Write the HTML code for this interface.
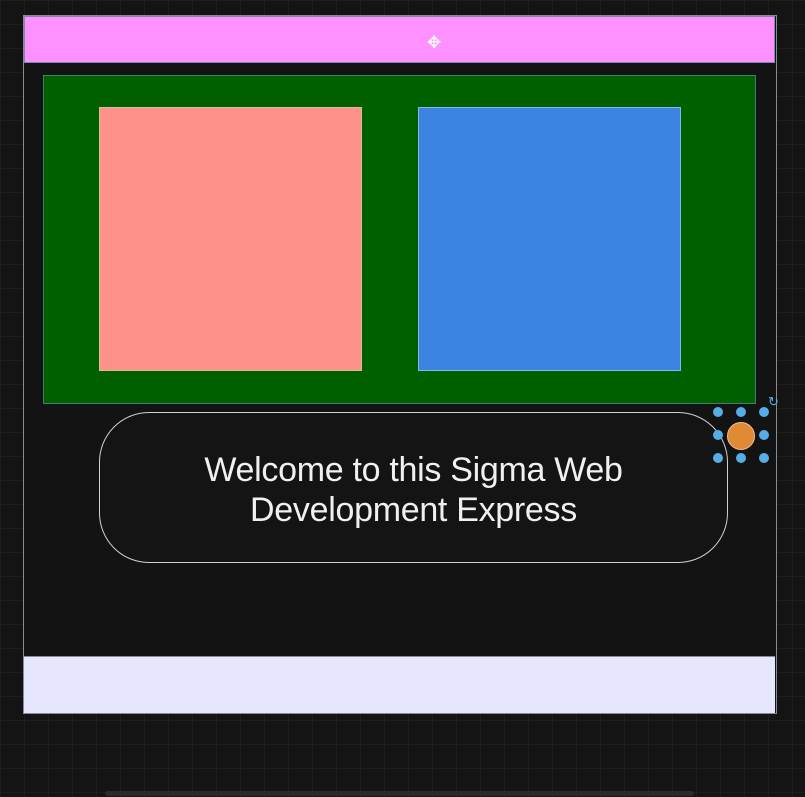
<!DOCTYPE html>
<html><head><style>
html,body{margin:0;padding:0;width:805px;height:797px;overflow:hidden;background:#141414;
background-image:linear-gradient(#1e1e1e 1px,transparent 1px),linear-gradient(90deg,#1e1e1e 1px,transparent 1px);background-size:24px 24px;position:relative;font-family:"Liberation Sans",sans-serif}
div{position:absolute;box-sizing:border-box}
.dot{width:10px;height:10px;border-radius:50%;background:#55aee6}
</style></head><body>
<div style="left:23px;top:15px;width:754px;height:699px;background:#131313;border:1px solid #8a8a95"></div>
<div style="left:24px;top:16px;width:751px;height:47px;background:#ff90ff;border:1px solid #7a8ab0"></div>
<div style="left:427px;top:34px;font-size:17px;color:#fff;line-height:17px">✥</div>
<div style="left:43px;top:75px;width:713px;height:329px;background:#006000;border:1px solid #3f7f6f"></div>
<div style="left:99px;top:107px;width:263px;height:264px;background:#ff918b;border:1px solid #d8c090"></div>
<div style="left:418px;top:107px;width:263px;height:264px;background:#3a83e0;border:1px solid #80b8e8"></div>
<div style="left:99px;top:412px;width:629px;height:151px;border:1px solid #d0d0d0;border-radius:50px;background:#141414"></div>
<div style="left:99px;top:450px;width:629px;text-align:center;color:#f0f0f0;font-size:34px;line-height:40px;letter-spacing:-0.3px">Welcome to this Sigma Web<br>Development Express</div>
<div style="left:727px;top:422px;width:28px;height:28px;border-radius:50%;background:#e08a35;border:1px solid #f0c090"></div>
<div class="dot" style="left:713px;top:407px"></div><div class="dot" style="left:736px;top:407px"></div><div class="dot" style="left:759px;top:407px"></div>
<div class="dot" style="left:713px;top:430px"></div><div class="dot" style="left:759px;top:430px"></div>
<div class="dot" style="left:713px;top:453px"></div><div class="dot" style="left:736px;top:453px"></div><div class="dot" style="left:759px;top:453px"></div>
<div style="left:768px;top:394px;color:#55aee6;font-size:13px">↻</div>
<div style="left:24px;top:656px;width:751px;height:57px;background:#e6e6fe;border-top:1px solid #8a8a95"></div>
<div style="left:105px;top:791px;width:589px;height:5px;background:#2a2a2a;border-radius:3px"></div>
</body></html>
